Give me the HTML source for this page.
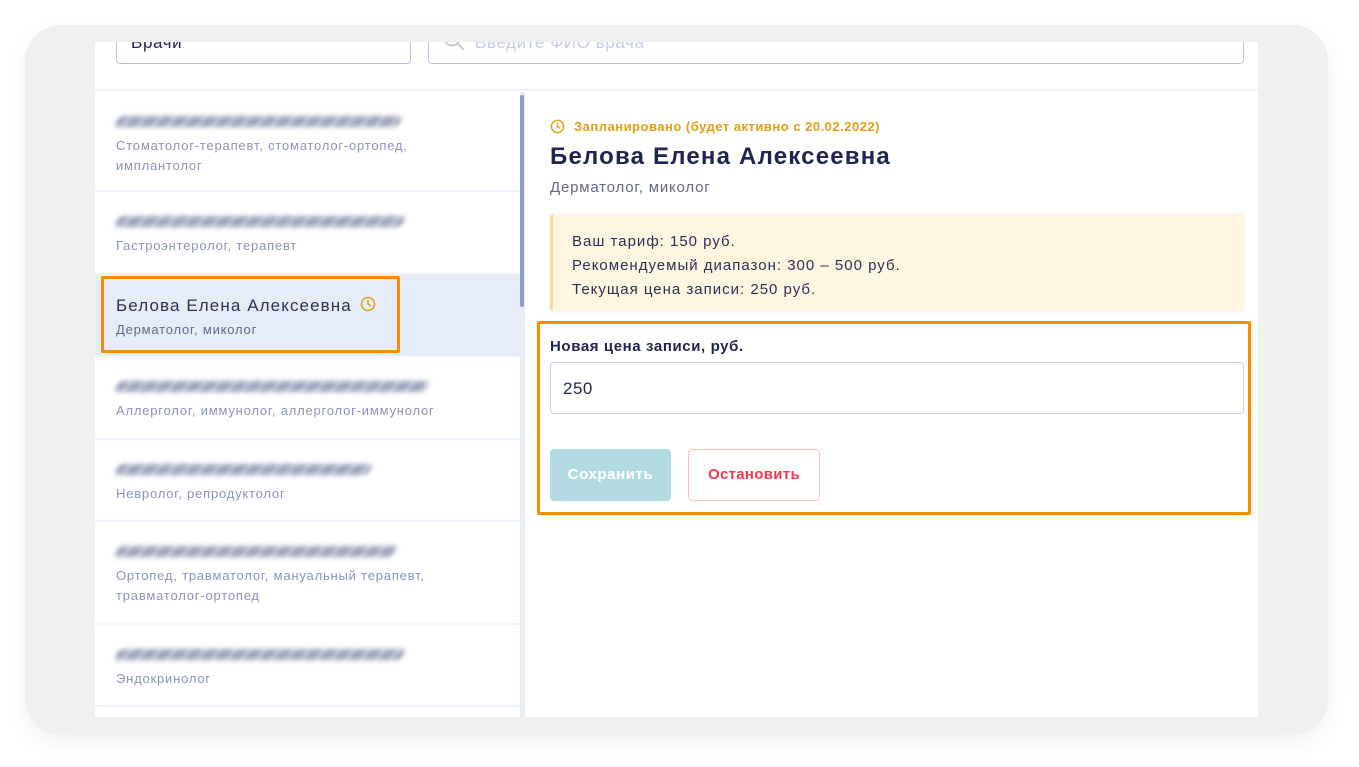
<!DOCTYPE html>
<html><head><meta charset="utf-8"><style>
*{box-sizing:border-box;margin:0;padding:0}
body{width:1359px;height:767px;background:#fff;position:relative;overflow:hidden;font-family:"Liberation Sans",sans-serif}
.card{position:absolute;left:25px;top:25px;width:1303px;height:710px;background:#efefef;border-radius:36px;box-shadow:0 8px 24px rgba(0,0,0,.06)}
.inner{position:absolute;left:95px;top:42px;width:1163px;height:675px;background:#fff;overflow:hidden}
.inp{position:absolute;top:-10px;height:32px;border:1px solid #b8c4e6;border-radius:4px;background:#fff;font-size:17px;color:#1d2550;padding-left:14px;letter-spacing:.6px}
.hsep{position:absolute;left:0;top:47px;width:1163px;height:2px;background:#f0f3fa}
.list{position:absolute;left:0;top:50px;width:425px}
.row{border-bottom:2px solid #eef2fa;padding:20px 21px 0;position:relative}
.blur{height:11px;background:repeating-linear-gradient(110deg,#8d95b0 0 10px,#b9bfd2 10px 14px);filter:blur(2.5px);border-radius:6px;margin-bottom:9px;margin-top:4px;transform:skewX(-20deg);opacity:.85}
.spec{font-size:13px;color:#8794bf;line-height:20px;letter-spacing:.8px}
.vsep{position:absolute;left:425px;top:50px;width:5px;height:625px;background:#e7ecf7}
.thumb{position:absolute;left:425px;top:53px;width:4px;height:212px;background:#8e9cc3;border-radius:2px}
.sel{background:#e7edf8}
</style></head><body>
<div class="card"></div>
<div class="inner">
 <div class="inp" style="left:21px;width:295px;line-height:20px">Врачи</div>
 <div class="inp" style="left:333px;width:816px;color:#c4cbe3;padding-left:46px;line-height:20px">Введите ФИО врача</div>
 <svg style="position:absolute;left:347px;top:-14px" width="24" height="24" viewBox="0 0 24 24"><circle cx="10" cy="10" r="7.5" fill="none" stroke="#c4cbe3" stroke-width="2"/><path d="M15.5 15.5L21 21" stroke="#c4cbe3" stroke-width="2" stroke-linecap="round"/></svg>
 <div class="hsep"></div>
 <div class="list">
  <div class="row" style="height:100px"><div class="blur" style="width:285px"></div><div class="spec">Стоматолог-терапевт, стоматолог-ортопед,<br>имплантолог</div></div>
  <div class="row" style="height:83px"><div class="blur" style="width:288px"></div><div class="spec">Гастроэнтеролог, терапевт</div></div>
  <div class="row sel" style="height:82px;padding-top:0"></div>
  <div class="row" style="height:83px"><div class="blur" style="width:312px"></div><div class="spec">Аллерголог, иммунолог, аллерголог-иммунолог</div></div>
  <div class="row" style="height:82px"><div class="blur" style="width:255px"></div><div class="spec">Невролог, репродуктолог</div></div>
  <div class="row" style="height:103px"><div class="blur" style="width:280px"></div><div class="spec">Ортопед, травматолог, мануальный терапевт,<br>травматолог-ортопед</div></div>
  <div class="row" style="height:82px"><div class="blur" style="width:288px"></div><div class="spec">Эндокринолог</div></div>
 </div>
 <div style="position:absolute;left:6px;top:234px;width:299px;height:77px;border:3px solid #ff8c00;border-radius:2px"></div>
 <div style="position:absolute;left:21px;top:254px;font-size:17px;color:#2a3157;letter-spacing:1.1px">Белова Елена Алексеевна <svg width="16" height="16" viewBox="0 0 16 16" style="vertical-align:-1px;margin-left:2px"><circle cx="8" cy="8" r="6.5" fill="none" stroke="#e5a21a" stroke-width="1.6"/><path d="M8 4.5V8l2.3 1.6" fill="none" stroke="#e5a21a" stroke-width="1.6" stroke-linecap="round"/></svg></div>
 <div style="position:absolute;left:21px;top:280px;font-size:13px;color:#5e6890;letter-spacing:.8px">Дерматолог, миколог</div>
 <div class="vsep"></div><div class="thumb"></div>

 <div style="position:absolute;left:455px;top:77px;font-size:13px;color:#e39e12;font-weight:bold;letter-spacing:.5px"><svg width="15" height="15" viewBox="0 0 16 16" style="vertical-align:-3px;margin-right:9px"><circle cx="8" cy="8" r="6.5" fill="none" stroke="#e5a21a" stroke-width="1.6"/><path d="M8 4.5V8l2.3 1.6" fill="none" stroke="#e5a21a" stroke-width="1.6" stroke-linecap="round"/></svg>Запланировано (будет активно с 20.02.2022)</div>
 <div style="position:absolute;left:455px;top:101px;font-size:24px;font-weight:bold;color:#1d2550;letter-spacing:1.2px">Белова Елена Алексеевна</div>
 <div style="position:absolute;left:455px;top:137px;font-size:15px;color:#616a8e;letter-spacing:.8px">Дерматолог, миколог</div>
 <div style="position:absolute;left:455px;top:172px;width:694px;height:97px;background:#fff6e1;border-left:3px solid #fbdc92;border-radius:3px;padding:16px 0 0 19px;font-size:15px;color:#2a3157;line-height:24px;letter-spacing:1px;box-shadow:0 1px 3px rgba(0,0,0,.06)">Ваш тариф: 150 руб.<br>Рекомендуемый диапазон: 300 – 500 руб.<br>Текущая цена записи: 250 руб.</div>
 <div style="position:absolute;left:442px;top:279px;width:714px;height:194px;border:3px solid #ff8c00;border-radius:2px"></div>
 <div style="position:absolute;left:455px;top:296px;font-size:15px;font-weight:bold;color:#1d2550;letter-spacing:.6px">Новая цена записи, руб.</div>
 <div style="position:absolute;left:455px;top:320px;width:694px;height:52px;border:1px solid #c3cce8;border-radius:4px;font-size:17px;color:#1d2550;padding:16px 0 0 12px;letter-spacing:.5px">250</div>
 <div style="position:absolute;left:455px;top:407px;width:121px;height:52px;background:#b1dbe0;border-radius:4px;color:#fff;font-size:15px;font-weight:bold;text-align:center;line-height:52px;letter-spacing:.6px">Сохранить</div>
 <div style="position:absolute;left:593px;top:407px;width:132px;height:52px;border:1px solid #ffc2b8;border-radius:4px;color:#f0394f;font-size:15px;font-weight:bold;text-align:center;line-height:50px;letter-spacing:.3px">Остановить</div>
</div>
</body></html>
